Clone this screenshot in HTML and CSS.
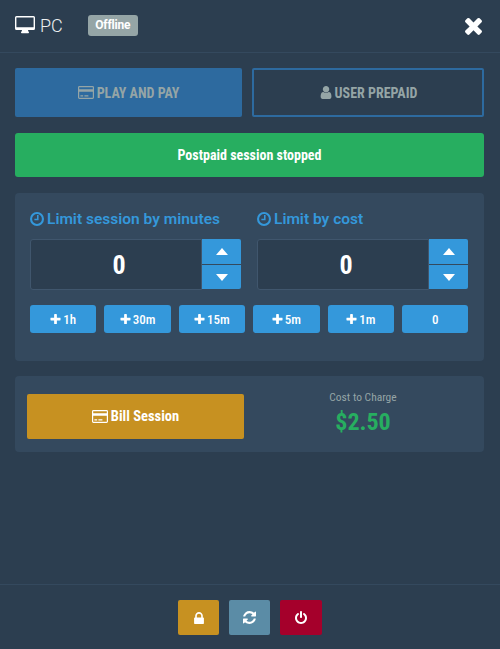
FILE: index.html
```html
<!DOCTYPE html>
<html>
    <head>
        <meta charset="UTF-8">
        <title>PC session</title>
        <link rel="stylesheet" href="styles.css">
    </head>
    <body>
        <svg class="sprite" xmlns="http://www.w3.org/2000/svg">
            <symbol id="i-desktop" viewBox="0 0 20 18">
                <path fill-rule="evenodd" d="M1.5 0h17A1.5 1.5 0 0 1 20 1.5v11a1.5 1.5 0 0 1-1.5 1.5H13c0 1.2 1 2 1 2.6 0 .4-.3.7-.7.7H6.700c-.4 0-.7-.3-.7-.7C6 16 7 15.200 7 14H1.500A1.500 1.500 0 0 1 0 12.500v-11A1.500 1.500 0 0 1 1.500 0zM1.400 1.400v9.800h17.200V1.400z"/>
            </symbol>
            <symbol id="i-card" viewBox="0 0 20 16">
                <path fill-rule="evenodd" d="M1.800 0h16.400A1.800 1.800 0 0 1 20 1.800v12.400a1.800 1.800 0 0 1-1.800 1.800H1.800A1.800 1.800 0 0 1 0 14.200V1.800A1.800 1.800 0 0 1 1.800 0zM1.500 1.500v2.300h17V1.500zM1.500 7v7.500h17V7zM3 11.500h3.500V13H3zM8 11.500h5V13H8z"/>
            </symbol>
            <symbol id="i-user" viewBox="0 0 1408 1664">
                <path transform="translate(-128 -128)" d="M1536 1399q0 109-62.500 187t-150.500 78h-854q-88 0-150.500-78t-62.500-187q0-85 8.500-160.500t31.500-152 58.500-131 94-89 134.500-34.500q131 128 313 128t313-128q76 0 134.500 34.500t94 89 58.500 131 31.500 152 8.500 160.500zm-256-887q0 159-112.500 271.500t-271.500 112.500-271.500-112.500-112.500-271.500 112.500-271.500 271.500-112.500 271.500 112.500 112.500 271.500z"/>
            </symbol>
            <symbol id="i-clock" viewBox="0 0 16 16">
                <circle cx="8" cy="8" r="6.800" fill="none" stroke="currentColor" stroke-width="2.400"/>
                <path d="M8 3.500h1.800v5.900H5V7.700h3z"/>
            </symbol>
            <symbol id="i-plus" viewBox="128 128 1536 1536">
                <path d="M1600 736v192q0 40-28 68t-68 28h-416v416q0 40-28 68t-68 28h-192q-40 0-68-28t-28-68v-416h-416q-40 0-68-28t-28-68v-192q0-40 28-68t68-28h416v-416q0-40 28-68t68-28h192q40 0 68 28t28 68v416h416q40 0 68 28t28 68z"/>
            </symbol>
            <symbol id="i-times" viewBox="230 230 1332 1332">
                <path d="M1490 1322q0 40-28 68l-136 136q-28 28-68 28t-68-28l-294-294-294 294q-28 28-68 28t-68-28l-136-136q-28-28-28-68t28-68l294-294-294-294q-28-28-28-68t28-68l136-136q28-28 68-28t68 28l294 294 294-294q28-28 68-28t68 28l136 136q28 28 28 68t-28 68l-294 294 294 294q28 28 28 68z"/>
            </symbol>
            <symbol id="i-lock" viewBox="320 128 1152 1408">
                <path d="M640 768h512v-192q0-106-75-181t-181-75-181 75-75 181v192zm832 96v576q0 40-28 68t-68 28h-960q-40 0-68-28t-28-68v-576q0-40 28-68t68-28h32v-192q0-184 132-316t316-132 316 132 132 316v192h32q40 0 68 28t28 68z"/>
            </symbol>
            <symbol id="i-refresh" viewBox="128 128 1536 1536">
                <path d="M1639 1056q0 5-1 7-64 268-268 434.500t-478 166.500q-146 0-282.500-55t-243.500-157l-129 129q-19 19-45 19t-45-19-19-45v-448q0-26 19-45t45-19h448q26 0 45 19t19 45-19 45l-137 137q71 66 161 102t187 36q134 0 250-65t186-179q11-17 53-117 8-23 30-23h192q13 0 22.500 9.500t9.500 22.500zm25-800v448q0 26-19 45t-45 19h-448q-26 0-45-19t-19-45 19-45l138-138q-148-137-349-137-134 0-250 65t-186 179q-11 17-53 117-8 23-30 23h-199q-13 0-22.500-9.500t-9.500-22.500v-7q65-268 270-434.500t480-166.500q146 0 284 55.500t245 156.500l130-129q19-19 45-19t45 19 19 45z"/>
            </symbol>
            <symbol id="i-power" viewBox="128 0 1536 1664">
                <path d="M1664 896q0 156-61 298t-164 245-245 164-298 61-298-61-245-164-164-245-61-298q0-182 80.500-343t226.500-270q43-32 95.500-25t83.500 50q32 42 24.500 94.500t-49.500 84.500q-98 74-151.500 181t-53.500 228q0 104 40.500 198.500t109.500 163.500 163.500 109.500 198.500 40.500 198.500-40.500 163.500-109.500 109.500-163.500 40.500-198.500q0-121-53.500-228t-151.500-181q-42-32-49.500-84.500t24.500-94.500q31-43 84-50t95 25q146 109 226.500 270t80.500 343zm-640-768v640q0 52-38 90t-90 38-90-38-38-90v-640q0-52 38-90t90-38 90 38 38 90z"/>
            </symbol>
        </svg>

        <div class="page">
            <header class="top">
                <svg class="ico ico_desktop"><use href="#i-desktop"/></svg>
                <span class="top_name">PC</span>
                <span class="badge">Offline</span>
                <svg class="ico ico_close"><use href="#i-times"/></svg>
            </header>

            <main class="content">
                <div class="tabs">
                    <button class="tab tab_on"><svg class="ico ico_card"><use href="#i-card"/></svg>PLAY AND PAY</button>
                    <button class="tab tab_off"><svg class="ico ico_user"><use href="#i-user"/></svg>USER PREPAID</button>
                </div>

                <div class="alert">Postpaid session stopped</div>

                <section class="panel limits">
                    <div class="limit_cols">
                        <div class="limit">
                            <h3 class="limit_title"><svg class="ico ico_clock"><use href="#i-clock"/></svg>Limit session by minutes</h3>
                            <div class="spinner">
                                <div class="spinner_value">0</div>
                                <div class="spinner_btns">
                                    <button class="arrow"><span class="tri tri_up"></span></button>
                                    <button class="arrow"><span class="tri tri_down"></span></button>
                                </div>
                            </div>
                        </div>
                        <div class="limit">
                            <h3 class="limit_title"><svg class="ico ico_clock"><use href="#i-clock"/></svg>Limit by cost</h3>
                            <div class="spinner">
                                <div class="spinner_value">0</div>
                                <div class="spinner_btns">
                                    <button class="arrow"><span class="tri tri_up"></span></button>
                                    <button class="arrow"><span class="tri tri_down"></span></button>
                                </div>
                            </div>
                        </div>
                    </div>
                    <div class="quick">
                        <button class="quick_btn"><svg class="ico ico_plus"><use href="#i-plus"/></svg>1h</button>
                        <button class="quick_btn"><svg class="ico ico_plus"><use href="#i-plus"/></svg>30m</button>
                        <button class="quick_btn"><svg class="ico ico_plus"><use href="#i-plus"/></svg>15m</button>
                        <button class="quick_btn"><svg class="ico ico_plus"><use href="#i-plus"/></svg>5m</button>
                        <button class="quick_btn"><svg class="ico ico_plus"><use href="#i-plus"/></svg>1m</button>
                        <button class="quick_btn">0</button>
                    </div>
                </section>

                <section class="panel bill">
                    <button class="bill_btn"><svg class="ico ico_card_big"><use href="#i-card"/></svg>Bill Session</button>
                    <div class="cost">
                        <div class="cost_label">Cost to Charge</div>
                        <div class="cost_value">$2.50</div>
                    </div>
                </section>
            </main>

            <footer class="bottom">
                <button class="act act_lock"><svg class="ico ico_lock"><use href="#i-lock"/></svg></button>
                <button class="act act_refresh"><svg class="ico ico_refresh"><use href="#i-refresh"/></svg></button>
                <button class="act act_power"><svg class="ico ico_power"><use href="#i-power"/></svg></button>
            </footer>
        </div>
    </body>
</html>
```

FILE: styles.css
```css
* {
    box-sizing: border-box;
}
html, body {
    margin: 0;
    height: 100%;
}
body {
    background: #2c3e50;
    color: #fff;
    font-family: Roboto, "Liberation Sans", sans-serif;
    overflow: hidden;
}
button {
    font-family: inherit;
    border: 0;
    padding: 0;
    color: inherit;
    cursor: pointer;
}
.sprite {
    display: none;
}
.ico {
    display: block;
    flex: none;
    fill: currentColor;
}
.page {
    height: 649px;
    display: flex;
    flex-direction: column;
}

/* header */
.top {
    height: 53px;
    padding: 0 17px 2px 15px;
    display: flex;
    align-items: center;
    border-bottom: 1px solid #34495e;
}
.ico_desktop {
    width: 20px;
    height: 18px;
    margin-right: 5px;
}
.top_name {
    font-size: 18px;
    font-weight: 300;
    color: #ecf0f1;
}
.badge {
    margin-left: 25px;
    height: 21px;
    width: 50px;
    background: #95a5a6;
    border-radius: 3px;
    font-size: 12px;
    font-weight: 700;
    letter-spacing: -0.2px;
    line-height: 21px;
    text-align: center;
}
.ico_close {
    margin-left: auto;
    width: 19px;
    height: 19px;
}

/* main area */
.content {
    flex: 1;
    padding: 15px 16px 0 15px;
}
.tabs {
    display: flex;
    gap: 10px;
}
.tab {
    height: 49px;
    display: flex;
    align-items: center;
    justify-content: center;
    font-size: 14px;
    font-weight: 700;
    font-stretch: 80%;
    color: #95a5a6;
    border-radius: 2px;
}
.tab_on {
    width: 227px;
    background: #2d6a9f;
}
.tab_off {
    width: 232px;
    background: transparent;
    border: 2px solid #2d6a9f;
}
.ico_card {
    width: 16px;
    height: 13px;
    margin-right: 3px;
}
.ico_user {
    width: 13px;
    height: 14px;
    margin-right: 3px;
}
.alert {
    margin-top: 16px;
    height: 44px;
    background: #27ae60;
    border-radius: 3px;
    font-size: 14px;
    font-weight: 700;
    font-stretch: 80%;
    line-height: 45px;
    text-align: center;
}
.panel {
    background: #34495e;
    border-radius: 4px;
}

/* limit panel */
.limits {
    margin-top: 16px;
    height: 168px;
    padding: 15px;
}
.limit_cols {
    display: flex;
    gap: 16px;
}
.limit {
    width: 211px;
}
.limit_title {
    margin: 0 0 10px;
    height: 21px;
    display: flex;
    align-items: center;
    font-size: 15.500px;
    font-weight: 600;
    font-stretch: 97%;
    color: #3498db;
}
.ico_clock {
    width: 14px;
    height: 14px;
    margin-right: 3px;
}
.spinner {
    display: flex;
    height: 51px;
}
.spinner_value {
    flex: 1;
    background: #2c3e50;
    border: 1px solid #40566d;
    border-radius: 3px 0 0 3px;
    padding-left: 6px;
    font-size: 26px;
    font-weight: 700;
    font-stretch: 80%;
    line-height: 50px;
    text-align: center;
}
.spinner_btns {
    width: 39px;
    display: flex;
    flex-direction: column;
    gap: 1px;
}
.arrow {
    height: 25px;
    background: #3498db;
    display: flex;
    align-items: center;
    justify-content: center;
}
.arrow:first-child {
    border-radius: 0 2px 0 0;
}
.arrow:last-child {
    height: 24px;
    border-radius: 0 0 2px 0;
}
.tri {
    width: 0;
    height: 0;
    border-left: 6px solid transparent;
    border-right: 6px solid transparent;
}
.tri_up {
    border-bottom: 7px solid #fff;
}
.tri_down {
    border-top: 7px solid #fff;
}
.quick {
    margin-top: 15px;
    display: flex;
    gap: 8px;
}
.quick_btn {
    width: 66.400px;
    height: 28px;
    background: #3498db;
    border-radius: 3px;
    display: flex;
    align-items: center;
    justify-content: center;
    font-size: 13px;
    font-weight: 500;
    font-stretch: 75%;
}
.ico_plus {
    width: 11px;
    height: 11px;
    margin-right: 2px;
}

/* billing panel */
.bill {
    margin-top: 15px;
    height: 76px;
    padding: 18px 12px;
    display: flex;
}
.bill_btn {
    width: 217px;
    height: 45px;
    background: #c79121;
    border-radius: 2px;
    display: flex;
    align-items: center;
    justify-content: center;
    font-size: 14.500px;
    font-weight: 700;
    font-stretch: 78%;
}
.ico_card_big {
    width: 16px;
    height: 13px;
    margin-right: 3px;
}
.cost {
    flex: 1;
    padding-left: 10px;
    text-align: center;
    margin-top: -4px;
}
.cost_label {
    font-size: 11.500px;
    font-stretch: 76%;
    color: #95a5a6;
    line-height: 14px;
}
.cost_value {
    margin-top: 5px;
    font-size: 24px;
    font-weight: 700;
    font-stretch: 80%;
    color: #27ae60;
    line-height: 27px;
}

/* footer */
.bottom {
    height: 65px;
    border-top: 1px solid #34495e;
    padding-top: 15px;
    display: flex;
    justify-content: center;
    gap: 10px;
}
.act {
    width: 41px;
    height: 35px;
    border-radius: 2px;
    display: flex;
    align-items: center;
    justify-content: center;
}
.act_lock {
    background: #c79121;
}
.act_refresh {
    background: #5b8ca6;
}
.act_power {
    width: 42px;
    background: #a5002b;
}
.ico_lock {
    width: 10px;
    height: 12px;
}
.ico_refresh {
    width: 13px;
    height: 13px;
}
.ico_power {
    width: 12px;
    height: 13px;
}
```
